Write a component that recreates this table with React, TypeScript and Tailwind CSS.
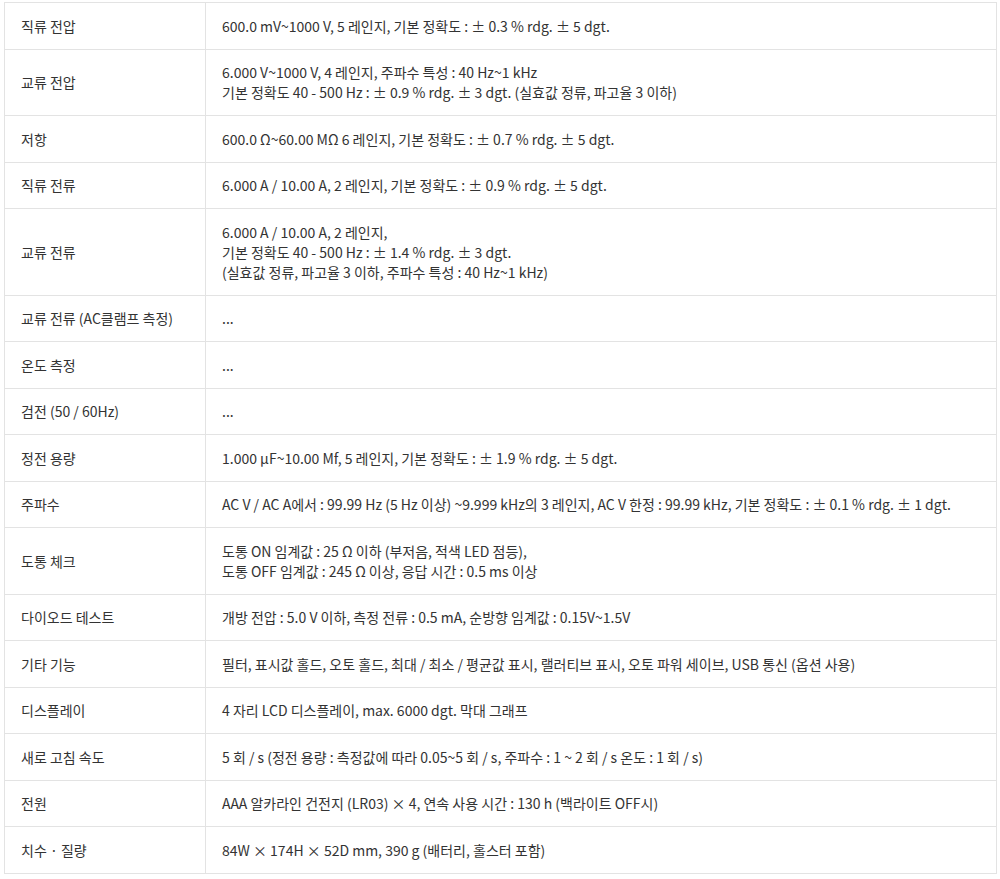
const specs: [string, string[]][] = [
  ["직류 전압", ["600.0 mV~1000 V, 5 레인지, 기본 정확도 : ± 0.3 % rdg. ± 5 dgt."]],
  ["교류 전압", ["6.000 V~1000 V, 4 레인지, 주파수 특성 : 40 Hz~1 kHz", "기본 정확도 40 - 500 Hz : ± 0.9 % rdg. ± 3 dgt. (실효값 정류, 파고율 3 이하)"]],
  ["저항", ["600.0 Ω~60.00 MΩ 6 레인지, 기본 정확도 : ± 0.7 % rdg. ± 5 dgt."]],
  ["직류 전류", ["6.000 A / 10.00 A, 2 레인지, 기본 정확도 : ± 0.9 % rdg. ± 5 dgt."]],
  ["교류 전류", ["6.000 A / 10.00 A, 2 레인지,", "기본 정확도 40 - 500 Hz : ± 1.4 % rdg. ± 3 dgt.", "(실효값 정류, 파고율 3 이하, 주파수 특성 : 40 Hz~1 kHz)"]],
  ["교류 전류 (AC클램프 측정)", ["..."]],
  ["온도 측정", ["..."]],
  ["검전 (50 / 60Hz)", ["..."]],
  ["정전 용량", ["1.000 μF~10.00 Mf, 5 레인지, 기본 정확도 : ± 1.9 % rdg. ± 5 dgt."]],
  ["주파수", ["AC V / AC A에서 : 99.99 Hz (5 Hz 이상) ~9.999 kHz의 3 레인지, AC V 한정 : 99.99 kHz, 기본 정확도 : ± 0.1 % rdg. ± 1 dgt."]],
  ["도통 체크", ["도통 ON 임계값 : 25 Ω 이하 (부저음, 적색 LED 점등),", "도통 OFF 임계값 : 245 Ω 이상, 응답 시간 : 0.5 ms 이상"]],
  ["다이오드 테스트", ["개방 전압 : 5.0 V 이하, 측정 전류 : 0.5 mA, 순방향 임계값 : 0.15V~1.5V"]],
  ["기타 기능", ["필터, 표시값 홀드, 오토 홀드, 최대 / 최소 / 평균값 표시, 랠러티브 표시, 오토 파워 세이브, USB 통신 (옵션 사용)"]],
  ["디스플레이", ["4 자리 LCD 디스플레이, max. 6000 dgt. 막대 그래프"]],
  ["새로 고침 속도", ["5 회 / s (정전 용량 : 측정값에 따라 0.05~5 회 / s, 주파수 : 1 ~ 2 회 / s 온도 : 1 회 / s)"]],
  ["전원", ["AAA 알카라인 건전지 (LR03) × 4, 연속 사용 시간 : 130 h (백라이트 OFF시)"]],
  ["치수 · 질량", ["84W × 174H × 52D mm, 390 g (배터리, 홀스터 포함)"]],
];

export default function App() {
  return (
    <div className="min-h-screen bg-white pl-[4px] pr-[3px] pt-[2px] font-['Noto_Sans_CJK_KR','Noto_Sans',sans-serif] text-[14px] leading-[20px] text-[#333]">
      <table className="w-full border-collapse">
        <tbody>
          {specs.map(([label, lines]) => (
            <tr key={label} className="border border-[#e3e3e3]">
              <td className="w-[201px] border-r border-[#e3e3e3] py-[12.75px] pl-[16px] pr-2 align-middle">{label}</td>
              <td className="py-[12.75px] pl-[16px] pr-2 align-middle">
                {lines.map((l, i) => (
                  <div key={i}>{l}</div>
                ))}
              </td>
            </tr>
          ))}
        </tbody>
      </table>
    </div>
  );
}
